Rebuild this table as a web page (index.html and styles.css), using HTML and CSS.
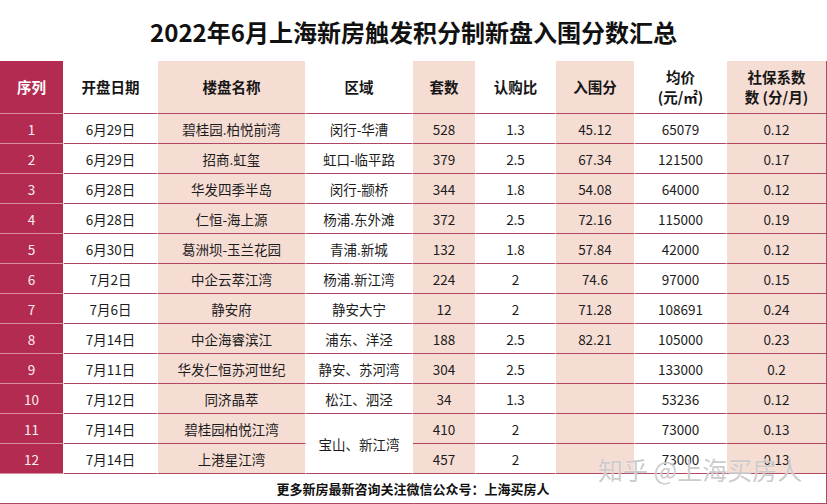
FILE: index.html
```html
<!DOCTYPE html>
<html lang="zh-CN">
<head>
<meta charset="utf-8">
<title>2022年6月上海新房触发积分制新盘入围分数汇总</title>
<link rel="stylesheet" href="styles.css">
</head>
<body>
<div class="page">
  <h1 class="title">2022年6月上海新房触发积分制新盘入围分数汇总</h1>
  <table class="sheet">
    <colgroup>
      <col class="c-red" style="width:64px">
      <col style="width:94px">
      <col class="c-shade" style="width:148px">
      <col style="width:107px">
      <col class="c-shade" style="width:63px">
      <col style="width:80px">
      <col class="c-shade" style="width:79px">
      <col style="width:92px">
      <col class="c-shade" style="width:100px">
    </colgroup>
    <thead>
      <tr>
        <th class="idx">序列</th>
        <th>开盘日期</th>
        <th>楼盘名称</th>
        <th>区域</th>
        <th>套数</th>
        <th>认购比</th>
        <th>入围分</th>
        <th>均价<br>(元/㎡)</th>
        <th class="last">社保系数<br>数 (分/月)</th>
      </tr>
    </thead>
    <tbody>
      <tr><td class="idx">1</td><td>6月29日</td><td>碧桂园.柏悦前湾</td><td>闵行-华漕</td><td>528</td><td>1.3</td><td>45.12</td><td>65079</td><td class="last">0.12</td></tr>
      <tr><td class="idx">2</td><td>6月29日</td><td>招商.虹玺</td><td>虹口-临平路</td><td>379</td><td>2.5</td><td>67.34</td><td>121500</td><td class="last">0.17</td></tr>
      <tr><td class="idx">3</td><td>6月28日</td><td>华发四季半岛</td><td>闵行-颛桥</td><td>344</td><td>1.8</td><td>54.08</td><td>64000</td><td class="last">0.12</td></tr>
      <tr><td class="idx">4</td><td>6月28日</td><td>仁恒-海上源</td><td>杨浦.东外滩</td><td>372</td><td>2.5</td><td>72.16</td><td>115000</td><td class="last">0.19</td></tr>
      <tr><td class="idx">5</td><td>6月30日</td><td>葛洲坝-玉兰花园</td><td>青浦.新城</td><td>132</td><td>1.8</td><td>57.84</td><td>42000</td><td class="last">0.12</td></tr>
      <tr><td class="idx">6</td><td>7月2日</td><td>中企云萃江湾</td><td>杨浦.新江湾</td><td>224</td><td>2</td><td>74.6</td><td>97000</td><td class="last">0.15</td></tr>
      <tr><td class="idx">7</td><td>7月6日</td><td>静安府</td><td>静安大宁</td><td>12</td><td>2</td><td>71.28</td><td>108691</td><td class="last">0.24</td></tr>
      <tr><td class="idx">8</td><td>7月14日</td><td>中企海睿滨江</td><td>浦东、洋泾</td><td>188</td><td>2.5</td><td>82.21</td><td>105000</td><td class="last">0.23</td></tr>
      <tr><td class="idx">9</td><td>7月11日</td><td>华发仁恒苏河世纪</td><td>静安、苏河湾</td><td>304</td><td>2.5</td><td></td><td>133000</td><td class="last">0.2</td></tr>
      <tr><td class="idx">10</td><td>7月12日</td><td>同济晶萃</td><td>松江、泗泾</td><td>34</td><td>1.3</td><td></td><td>53236</td><td class="last">0.12</td></tr>
      <tr><td class="idx">11</td><td>7月14日</td><td>碧桂园柏悦江湾</td><td rowspan="2" class="merged">宝山、新江湾</td><td>410</td><td>2</td><td></td><td>73000</td><td class="last">0.13</td></tr>
      <tr><td class="idx">12</td><td>7月14日</td><td>上港星江湾</td><td>457</td><td>2</td><td></td><td>73000</td><td class="last">0.13</td></tr>
    </tbody>
    <tfoot>
      <tr><td colspan="9" class="foot">更多新房最新咨询关注微信公众号：上海买房人</td></tr>
    </tfoot>
  </table>
  <div class="watermark">知乎 @上海买房人</div>
</div>
</body>
</html>
```
FILE: styles.css
```css
html, body {
  margin: 0;
  padding: 0;
  background: #ffffff;
}
body {
  font-family: "Noto Sans CJK SC", "Noto Sans", "DejaVu Sans", sans-serif;
  color: #1c1c1c;
}
.page {
  position: relative;
  width: 827px;
  height: 504px;
  overflow: hidden;
}
.title {
  margin: 0;
  height: 61px;
  display: flex;
  align-items: center;
  justify-content: center;
  font-size: 24px;
  font-weight: 700;
  color: #111;
  letter-spacing: 0;
  padding-top: 2px;
  box-sizing: border-box;
}
.sheet {
  width: 827px;
  table-layout: fixed;
  border-collapse: separate;
  border-spacing: 0;
}
.c-red { background: #b42b51; }
.c-shade { background: #f6ddd4; }
.sheet th,
.sheet td {
  padding: 0;
  text-align: center;
  vertical-align: middle;
  border-bottom: 1px solid #b04863;
  border-right: 1px solid #ffffff;
  box-sizing: border-box;
}
.sheet th {
  height: 53px;
  font-size: 14.5px;
  font-weight: 700;
  line-height: 20px;
  color: #161616;
}
.sheet td {
  height: 30px;
  font-size: 13.5px;
  line-height: 18px;
}
.sheet .idx {
  color: #fbeaef;
  border-bottom-color: #d98fa2;
}
.sheet th.idx { color: #ffffff; }
.sheet .last { border-right: 1px solid #b04863; }
.sheet .merged { background: #ffffff; }
.sheet .foot {
  background: #ffffff;
  height: 30px;
  font-size: 13px;
  font-weight: 700;
  color: #111;
  border-right: 1px solid #b04863;
  border-bottom: 1px solid #b04863;
}
.watermark {
  position: absolute;
  left: 598px;
  top: 453px;
  font-size: 25px;
  line-height: 32px;
  font-weight: 400;
  color: rgba(190, 190, 190, 0.8);
  text-shadow: 0 0 1px rgba(255, 255, 255, 0.9);
  white-space: nowrap;
  letter-spacing: 0;
}
```
